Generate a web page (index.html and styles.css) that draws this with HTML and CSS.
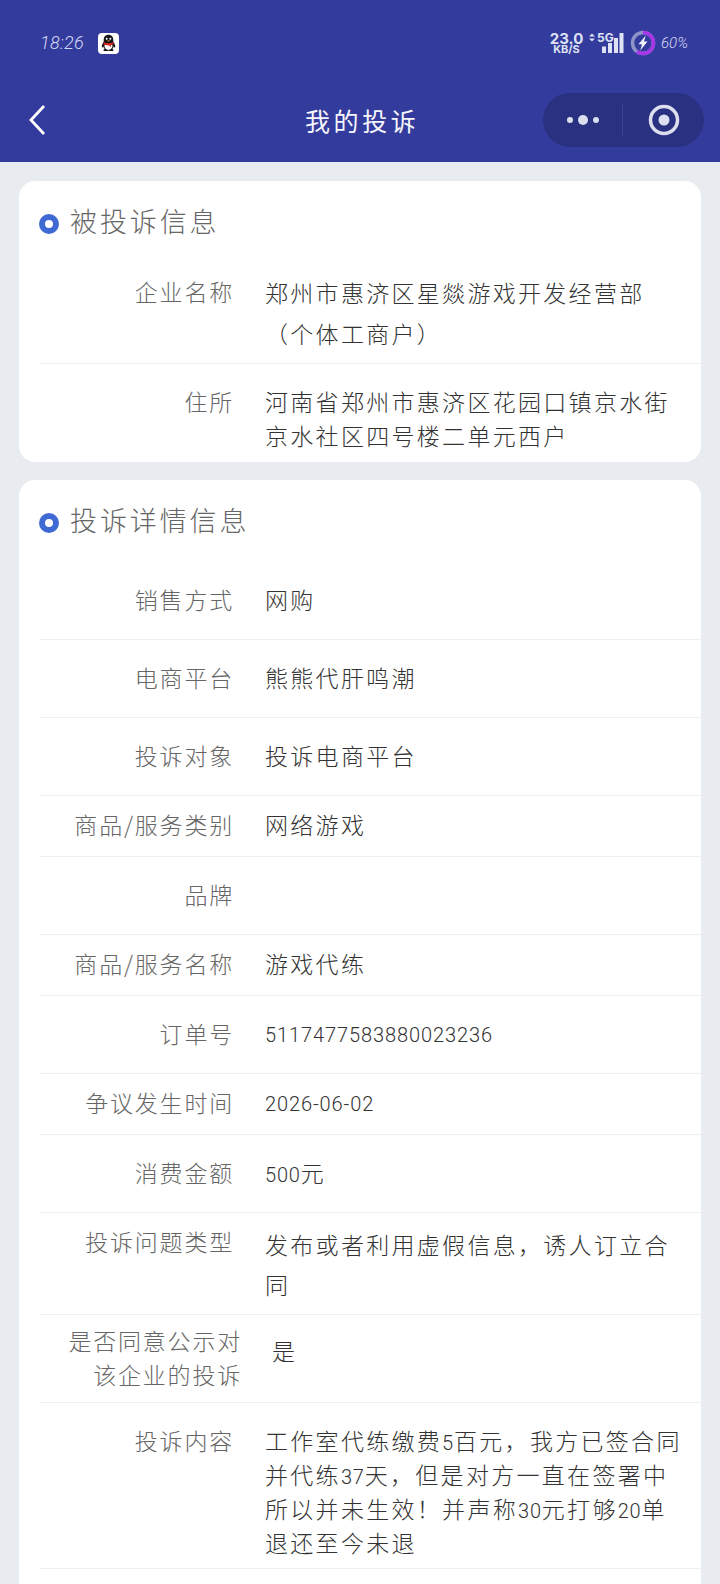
FILE: index.html
```html
<!DOCTYPE html>
<html lang="zh-CN">
<head>
<meta charset="utf-8">
<title>我的投诉</title>
<link rel="stylesheet" href="styles.css">
</head>
<body>
<header class="top">
  <div class="status">
    <div class="status-left">
      <span class="time">18:26</span>
      <svg class="qq" viewBox="0 0 21 21" aria-hidden="true">
        <rect width="21" height="21" rx="4" fill="#fff"/>
        <path d="M10.500 1.800c-3.300 0-4.800 2.500-4.800 5.200v1.800c-1.200 1.600-2.200 3.600-1.800 5.600.5.300 1.100-.3 1.500-1 .2 1 .7 1.900 1.400 2.600-.9.400-1.700.9-1.300 1.600.5.700 2.600.6 5.000.2 2.400.4 4.500.5 5-.2.400-.7-.4-1.200-1.300-1.600.7-.7 1.200-1.600 1.400-2.600.4.700 1 1.300 1.500 1 .4-2-.6-4-1.800-5.600V7c0-2.700-1.500-5.200-4.800-5.200z" fill="#15151a"/>
        <path d="M6.800 11.500c2.400.8 5 .8 7.400 0 .6 1.300.5 5-3.700 5.400-4.200-.4-4.300-4.100-3.700-5.400z" fill="#fff"/>
        <path d="M5.600 9.300c3.200 1.300 6.600 1.300 9.800 0l.4 1.500c-1 .6-2 .9-3 1.100l.5 2.300-2.300-1.800c-2.200.1-4.200-.4-5.800-1.600z" fill="#d8261f"/>
        <circle cx="8.700" cy="5.800" r="1" fill="#fff"/>
        <circle cx="12.300" cy="5.800" r="1" fill="#fff"/>
        <path d="M8.800 7.500h3.400l-1.700 1.100z" fill="#f4b52a"/>
      </svg>
    </div>
    <div class="status-right">
      <div class="speed"><span class="speed-num">23.0</span><span class="speed-unit">KB/S</span></div>
      <svg class="signal" viewBox="0 0 36 24" aria-hidden="true">
        <path d="M0 5.500 3 2.500 6 5.500zM0 7.500 3 10.500 6 7.500z" fill="#dfe2f5"/>
        <text x="8" y="11" class="signal-text">5G</text>
        <rect x="13" y="15.500" width="4" height="6.500" fill="#dfe2f5"/>
        <rect x="19" y="12" width="4" height="10" fill="#dfe2f5"/>
        <rect x="25" y="7" width="4" height="15" fill="#dfe2f5"/>
        <rect x="30.500" y="2" width="4" height="20" fill="#dfe2f5"/>
      </svg>
      <svg class="battery" viewBox="0 0 26 26" aria-hidden="true">
        <circle cx="13" cy="13" r="10.500" fill="none" stroke="#8d93c6" stroke-width="3.500"/>
        <path d="M13 2.500a10.500 10.500 0 1 1-6.200 19" fill="none" stroke="#a935ea" stroke-width="3.500"/>
        <path d="M15.800 5.500 8.500 14.200h3.500L10.200 20.500l7.300-9h-3.500z" fill="#f2f3fb"/>
      </svg>
      <span class="pct">60%</span>
    </div>
  </div>
  <nav class="nav">
    <svg class="back" viewBox="0 0 20 32" aria-hidden="true">
      <path d="M16 2 3 16l13 14" fill="none" stroke="#fff" stroke-width="2.800"/>
    </svg>
    <h1 class="title">我的投诉</h1>
    <div class="capsule">
      <svg class="more" viewBox="0 0 36 12" aria-hidden="true">
        <circle cx="4" cy="6" r="3"/>
        <circle cx="17" cy="6" r="5"/>
        <circle cx="30" cy="6" r="3"/>
      </svg>
      <span class="capsule-line"></span>
      <svg class="close" viewBox="0 0 32 32" aria-hidden="true">
        <circle cx="16" cy="16" r="13.500" fill="none" stroke-width="3.500"/>
        <circle class="close-dot" cx="16" cy="16" r="5.500"/>
      </svg>
    </div>
  </nav>
</header>
<main class="page">
  <section class="card">
    <h2 class="card-title"><span class="dot"></span>被投诉信息</h2>
    <dl class="rows">
      <div class="row row-addr">
        <dt>企业名称</dt>
        <dd>郑州市惠济区星燚游戏开发经营部（个体工商户）</dd>
      </div>
      <div class="row row-home">
        <dt>住所</dt>
        <dd>河南省郑州市惠济区花园口镇京水街京水社区四号楼二单元西户</dd>
      </div>
    </dl>
  </section>
  <section class="card card-detail">
    <h2 class="card-title"><span class="dot"></span>投诉详情信息</h2>
    <dl class="rows rows-detail">
      <div class="row row-tall"><dt>销售方式</dt><dd>网购</dd></div>
      <div class="row row-tall"><dt>电商平台</dt><dd>熊熊代肝鸣潮</dd></div>
      <div class="row row-tall"><dt>投诉对象</dt><dd>投诉电商平台</dd></div>
      <div class="row row-short"><dt>商品/服务类别</dt><dd>网络游戏</dd></div>
      <div class="row row-tall"><dt>品牌</dt><dd></dd></div>
      <div class="row row-short"><dt>商品/服务名称</dt><dd>游戏代练</dd></div>
      <div class="row row-tall"><dt>订单号</dt><dd class="num">5117477583880023236</dd></div>
      <div class="row row-short"><dt>争议发生时间</dt><dd class="num">2026-06-02</dd></div>
      <div class="row row-tall"><dt>消费金额</dt><dd><span class="num">500</span>元</dd></div>
      <div class="row row-type"><dt>投诉问题类型</dt><dd>发布或者利用虚假信息，诱人订立合同</dd></div>
      <div class="row row-consent"><dt>是否同意公示对该企业的投诉</dt><dd>是</dd></div>
      <div class="row row-body"><dt>投诉内容</dt><dd>工作室代练缴费<span class="num">5</span>百元，我方已签合同并代练<span class="num">37</span>天，但是对方一直在签署中所以并未生效！并声称<span class="num">30</span>元打够<span class="num">20</span>单退还至今未退</dd></div>
    </dl>
  </section>
</main>
</body>
</html>
```

FILE: styles.css
```css
* { box-sizing: border-box; }
html, body { margin: 0; padding: 0; }
body {
  width: 720px;
  height: 1584px;
  overflow: hidden;
  background: #e8ebef;
  font-family: "Noto Sans CJK SC", "Noto Sans", sans-serif;
}
.top {
  height: 162px;
  background: #333c9c;
  padding: 31px 16px 0 40px;
}
.status {
  height: 24px;
  display: flex;
  justify-content: space-between;
  align-items: center;
}
.status-left { display: flex; align-items: center; gap: 15px; }
.time {
  width: 43px;
  font-family: "Roboto", sans-serif;
  font-weight: 300;
  font-style: italic;
  font-size: 18px;
  letter-spacing: 0.300px;
  line-height: 24px;
  color: #d5d8f2;
  white-space: nowrap;
}
.qq { width: 21px; height: 21px; }
.status-right { display: flex; align-items: center; margin-right: 16px; }
.speed {
  width: 33px;
  display: flex;
  flex-direction: column;
  align-items: center;
  font-family: "Inter", sans-serif;
  font-weight: 700;
  color: #dfe2f5;
}
.speed-num { font-size: 15px; line-height: 13px; }
.speed-unit { font-size: 11px; line-height: 9px; }
.signal { width: 36px; height: 24px; margin-left: 6px; }
.signal-text { font: 700 12px "Inter", sans-serif; fill: #dfe2f5; }
.battery { width: 26px; height: 26px; margin-left: 5px; }
.pct {
  margin-left: 5px;
  width: 27px;
  font-family: "Roboto", sans-serif;
  font-weight: 300;
  font-style: italic;
  font-size: 15px;
  line-height: 24px;
  color: #d5d8f2;
  white-space: nowrap;
}
.nav {
  margin: 38px 0 0 -12px;
  height: 54px;
  display: grid;
  grid-template-columns: 277px auto 1fr;
  align-items: center;
}
.back { width: 20px; height: 32px; }
.title {
  margin: 0;
  font-size: 25px;
  font-weight: 400;
  letter-spacing: 3.600px;
  color: #f6f6fb;
  line-height: 32px;
}
.capsule {
  justify-self: end;
  width: 161px;
  height: 54px;
  border-radius: 27px;
  background: #2a3180;
  display: flex;
  align-items: center;
  padding: 0 0 0 23px;
}
.more { width: 36px; height: 12px; fill: #dcdfef; }
.capsule-line { width: 1px; height: 32px; margin-left: 20px; background: #3a4296; }
.close { width: 32px; height: 32px; margin-left: 25px; stroke: #dcdfef; }
.close-dot { fill: #dcdfef; stroke: none; }
.page {
  padding: 19px 19px 0;
  display: flex;
  flex-direction: column;
  gap: 18px;
}
.card {
  background: #fff;
  border-radius: 16px;
  padding-left: 21px;
}
.card-detail { padding-bottom: 40px; }
.card-title {
  margin: 0;
  height: 78px;
  display: flex;
  align-items: center;
  gap: 11px;
  font-size: 27px;
  font-weight: 300;
  letter-spacing: 2.900px;
  color: #666;
}
.dot {
  width: 20px;
  height: 20px;
  margin: 8px 0 0 -1px;
  border: 6px solid #3f69d3;
  border-radius: 50%;
}
.rows { margin: 0; }
.rows-detail { padding-top: 4px; }
.row {
  display: grid;
  grid-template-columns: 194px 1fr;
  column-gap: 31px;
  border-bottom: 1px solid #eceef1;
  font-size: 23px;
  letter-spacing: 1.800px;
}
.row dt {
  text-align: right;
  color: #666;
  line-height: 34px;
  font-weight: 300;
}
.row dd {
  margin: 0;
  color: #333;
  line-height: 34px;
  letter-spacing: 2.300px;
  padding-right: 16px;
  font-weight: 300;
}
.num {
  font-family: "Roboto", "Noto Sans", sans-serif;
  font-size: 20px;
  letter-spacing: 0.800px;
  line-height: 1;
}
.row dd.num { line-height: 34px; letter-spacing: 0.900px; padding-top: 2px; }
.row-addr { height: 105px; padding-top: 15px; }
.row-addr dd { line-height: 41px; margin-top: -2px; }
.row-home { height: 98px; padding-top: 20px; border-bottom: 0; }
.row-tall { height: 78px; padding-top: 20px; }
.row-short { height: 61px; padding-top: 11px; }
.row-type { height: 102px; padding-top: 11px; }
.row-type dd { line-height: 40px; }
.row-consent {
  height: 88px;
  padding-top: 8px;
  grid-template-columns: 202px 1fr;
  column-gap: 30px;
}
.row-consent dt { padding-left: 24px; }
.row-consent dd { padding-top: 10px; }
.row-body { height: 166px; padding-top: 20px; }
```
